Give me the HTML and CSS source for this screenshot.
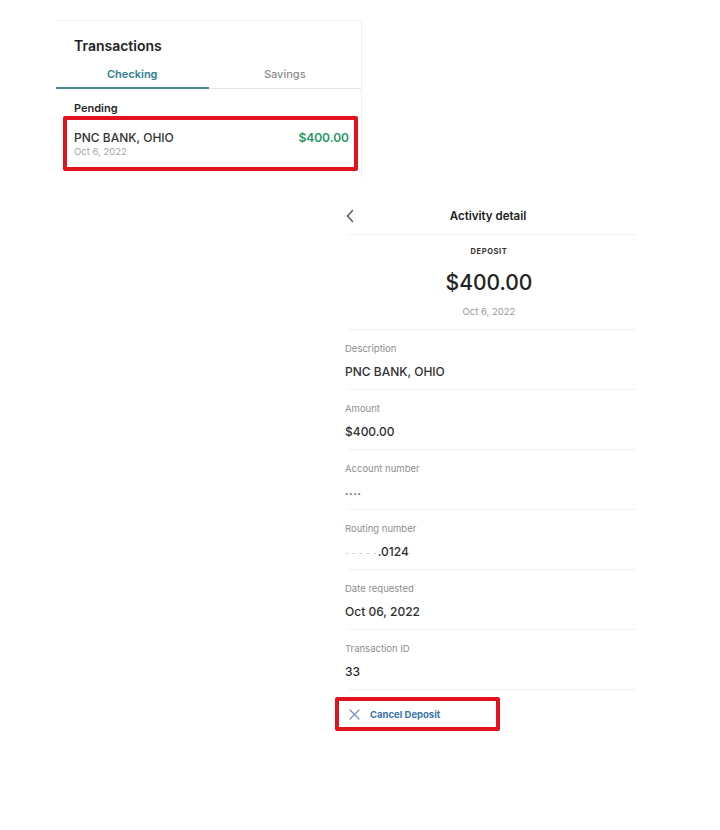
FILE: index.html
```html
<!DOCTYPE html>
<html lang="en">
<head>
<meta charset="utf-8">
<title>Transactions</title>
<link rel="stylesheet" href="styles.css">
</head>
<body>
<div class="page">
  <section class="card">
    <h1 class="card-title">Transactions</h1>
    <div class="tabs">
      <div class="tab tab-active">Checking</div>
      <div class="tab">Savings</div>
    </div>
    <div class="group-label">Pending</div>
    <div class="highlight tx">
      <div class="tx-main">
        <div class="tx-name">PNC BANK, OHIO</div>
        <div class="tx-date">Oct 6, 2022</div>
      </div>
      <div class="tx-amount">$400.00</div>
    </div>
  </section>

  <section class="detail">
    <header class="detail-head">
      <svg class="chev" width="10" height="14" viewBox="0 0 10 14"><path d="M7.5 1.5 L2.5 7 L7.5 12.5" fill="none" stroke="#555" stroke-width="1.4" stroke-linecap="round" stroke-linejoin="round"/></svg>
      <div class="detail-title">Activity detail</div>
      <span></span>
    </header>
    <div class="divider"></div>
    <div class="summary">
      <div class="kind">DEPOSIT</div>
      <div class="big-amount">$400.00</div>
      <div class="sum-date">Oct 6, 2022</div>
    </div>
    <div class="divider"></div>

    <div class="row"><div class="label">Description</div><div class="value">PNC BANK, OHIO</div></div>
    <div class="divider"></div>
    <div class="row"><div class="label">Amount</div><div class="value">$400.00</div></div>
    <div class="divider"></div>
    <div class="row"><div class="label">Account number</div><div class="value masked">••••</div></div>
    <div class="divider"></div>
    <div class="row"><div class="label">Routing number</div><div class="value"><span class="mask">-&nbsp;-&nbsp;-&nbsp;-&nbsp;-</span>.0124</div></div>
    <div class="divider"></div>
    <div class="row"><div class="label">Date requested</div><div class="value">Oct 06, 2022</div></div>
    <div class="divider"></div>
    <div class="row"><div class="label">Transaction ID</div><div class="value">33</div></div>
    <div class="divider"></div>

    <div class="highlight cancel">
      <svg class="x-icon" width="11" height="11" viewBox="0 0 11 11"><path d="M1 1 L10 10 M10 1 L1 10" stroke="#6f93b8" stroke-width="1.2" stroke-linecap="round"/></svg>
      <span class="cancel-text">Cancel Deposit</span>
    </div>
  </section>
</div>
</body>
</html>
```

FILE: styles.css
```css
* { box-sizing: border-box; }
html, body { margin: 0; padding: 0; background: #fff; }
body {
  font-family: Inter, "Open Sans", "DejaVu Sans", sans-serif;
  color: #2a2a2a;
  width: 720px;
  height: 830px;
  overflow: hidden;
}
.page {
  display: flex;
  flex-direction: column;
  padding-top: 20px;
}

/* Transactions card */
.card {
  margin-left: 56px;
  width: 306px;
  border-top: 1px solid #f3f3f3;
  border-right: 1px solid #f0f0f0;
  padding-bottom: 6px;
}
.card-title {
  margin: 0;
  padding: 15px 0 0 18px;
  font-size: 14px;
  line-height: 20px;
  font-weight: 600;
  color: #222;
}
.tabs {
  display: flex;
  margin-top: 6px;
  border-bottom: 1px solid #e4e4e4;
}
.tab {
  flex: 1;
  text-align: center;
  font-size: 11px;
  line-height: 16px;
  padding: 4px 0 5px;
  color: #8c8c8c;
  font-weight: 500;
  border-bottom: 1px solid transparent;
  margin-bottom: -1px;
}
.tab-active {
  color: #2f7d93;
  font-weight: 600;
  border-bottom: 2px solid #4c8796;
}
.group-label {
  margin-top: 11px;
  padding-left: 18px;
  font-size: 11px;
  line-height: 16px;
  font-weight: 600;
  color: #2a2a2a;
}
.highlight {
  border: 4px solid #e1141d;
  border-radius: 2px;
}
.tx {
  margin: 0 0 0 7px;
  width: 295px;
  display: flex;
  justify-content: space-between;
  align-items: flex-start;
  padding: 10px 5px 9px 7px;
}
.tx-name {
  font-size: 12px;
  line-height: 16px;
  font-weight: 500;
  color: #333;
}
.tx-date {
  font-size: 9.5px;
  line-height: 12px;
  color: #a5a5a5;
}
.tx-amount {
  font-size: 12px;
  line-height: 16px;
  font-weight: 600;
  color: #1f9a62;
}

/* Activity detail */
.detail {
  margin: 21px 0 0 335px;
  width: 300px;
}
.detail-head {
  display: grid;
  grid-template-columns: 20px 1fr 24px;
  align-items: center;
  height: 36px;
  padding-left: 10px;
}
.chev { display: block; }
.detail-title {
  text-align: center;
  font-size: 11.5px;
  font-weight: 600;
  color: #222;
}
.divider {
  height: 1px;
  background: #efefef;
  margin-left: 15px;
}
.summary {
  display: flex;
  flex-direction: column;
  align-items: center;
  padding: 11px 0 10px 8px;
}
.kind {
  font-size: 7.5px;
  line-height: 12px;
  font-weight: 700;
  letter-spacing: 0.6px;
  color: #333;
}
.big-amount {
  margin-top: 12px;
  font-size: 21px;
  line-height: 26px;
  font-weight: 500;
  color: #222;
}
.sum-date {
  margin-top: 9px;
  font-size: 9.5px;
  line-height: 14px;
  color: #9a9a9a;
}
.row {
  display: flex;
  flex-direction: column;
  gap: 7px;
  padding: 12px 0 8px 10px;
}
.label {
  font-size: 9.5px;
  line-height: 14px;
  color: #8e8e8e;
}
.value {
  height: 18px;
  font-size: 12px;
  line-height: 18px;
  font-weight: 500;
  color: #303030;
  overflow: hidden;
}
.masked {
  font-size: 6px;
  letter-spacing: 1px;
  color: #555;
  padding-top: 2px;
}
.mask {
  font-size: 7px;
  line-height: 0;
  color: #b5b5b5;
  letter-spacing: 1px;
}
.cancel {
  margin-top: 7px;
  width: 165px;
  height: 34px;
  display: flex;
  align-items: center;
  gap: 10px;
  padding-left: 10px;
}
.x-icon { display: block; }
.cancel-text {
  font-size: 9.5px;
  font-weight: 700;
  color: #3a74a8;
}
```
